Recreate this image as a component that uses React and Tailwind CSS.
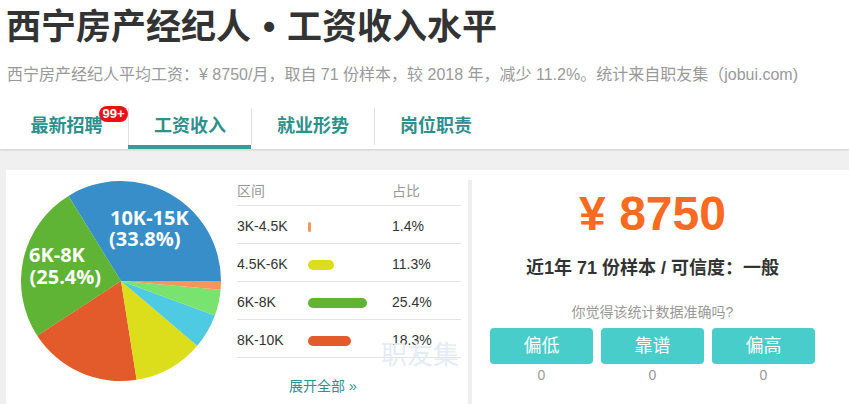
import React from "react";

const slices = [
  { p: 33.8, c: "#378ec8" },
  { p: 25.4, c: "#5fb335" },
  { p: 18.3, c: "#e35b2a" },
  { p: 11.3, c: "#dcdd1b" },
  { p: 5.6, c: "#4ecbe3" },
  { p: 4.2, c: "#78e36e" },
  { p: 1.4, c: "#f79656" },
];

function Pie() {
  const cx = 101, cy = 101, r = 100;
  let a = 0;
  const paths = slices.map((s, i) => {
    const a0 = a;
    const a1 = a + (s.p / 100) * Math.PI * 2;
    a = a1;
    const x0 = cx + r * Math.cos(a0), y0 = cy - r * Math.sin(a0);
    const x1 = cx + r * Math.cos(a1), y1 = cy - r * Math.sin(a1);
    const large = a1 - a0 > Math.PI ? 1 : 0;
    const d = `M${cx},${cy} L${x0},${y0} A${r},${r} 0 ${large} 0 ${x1},${y1} Z`;
    return <path key={i} d={d} fill={s.c} />;
  });
  return (
    <svg width="202" height="202" viewBox="0 0 202 202" className="shrink-0">
      {paths}
      <g fill="#fff" fontFamily="'Open Sans', sans-serif" fontWeight="700" fontSize="20">
        <text x="90" y="44.5">10K-15K</text>
        <text x="89" y="66">(33.8%)</text>
        <text x="9" y="82">6K-8K</text>
        <text x="9.5" y="103.5">(25.4%)</text>
      </g>
    </svg>
  );
}

const rows = [
  { r: "3K-4.5K", p: "1.4%", w: 3, c: "bg-[#f79656]" },
  { r: "4.5K-6K", p: "11.3%", w: 26, c: "bg-[#dcdd1b]" },
  { r: "6K-8K", p: "25.4%", w: 59, c: "bg-[#5fb335]" },
  { r: "8K-10K", p: "18.3%", w: 43, c: "bg-[#e35b2a]" },
];

const tabs = ["最新招聘", "工资收入", "就业形势", "岗位职责"];

export default function App() {
  return (
    <div className="w-[849px] h-[404px] overflow-hidden bg-[#f0f0f0] font-['Liberation_Sans','Noto_Sans_CJK_SC',sans-serif] flex flex-col">
      {/* Header */}
      <div className="bg-white h-[149px] shrink-0 shadow-[0_1px_2px_rgba(0,0,0,0.15)] relative z-10">
        <div className="h-[54px] leading-[54px] pl-[6px] text-[35px] font-bold text-[#333] whitespace-nowrap">
          西宁房产经纪人<span className="inline-block w-[36px] text-center">•</span>工资收入水平
        </div>
        <div className="h-[42px] leading-[42px] pl-[7px] text-[16px] text-[#999] whitespace-nowrap">
          西宁房产经纪人平均工资：¥ 8750/月，取自 71 份样本，较 2018 年，减少 11.2%。统计来自职友集（jobui.com)
        </div>
        <div className="mt-[12px] flex pl-[5px]">
          {tabs.map((t, i) => (
            <div key={t} className="w-[123px] flex flex-col relative">
              <div
                className={`h-[37px] flex items-center justify-center text-[18px] font-bold text-[#2e8f8c] ${
                  i > 0 ? "border-l border-[#e0e0e0]" : ""
                }`}
              >
                {t}
              </div>
              <div className={`h-[4px] ${i === 1 ? "bg-[#379b97]" : ""}`} />
              {i === 0 && (
                <div className="absolute left-[94px] top-[-2px] w-[29px] h-[16px] rounded-full bg-[#e8111b] text-white text-[13px] font-bold leading-[16px] text-center font-['Liberation_Sans',sans-serif]">
                  99+
                </div>
              )}
            </div>
          ))}
        </div>
      </div>

      {/* Card */}
      <div className="mt-[21px] ml-[6px] flex-1 bg-white flex">
        {/* Left */}
        <div className="w-[462px] shrink-0 flex pt-[6px] pl-[14px]">
          <div className="mt-[4px]">
            <Pie />
          </div>
          <div className="ml-[15px] w-[224px] relative">
            <div className="h-[30px] flex items-center pt-[1px] text-[14px] text-[#999] border-b border-[#e3e3e3]">
              <div className="w-[155px]">区间</div>
              <div>占比</div>
            </div>
            {rows.map((row) => (
              <div
                key={row.r}
                className="h-[38px] flex items-center pt-[4px] text-[14px] text-[#333] border-b border-[#e3e3e3]"
              >
                <div className="w-[71px]">{row.r}</div>
                <div className="w-[84px] flex items-center">
                  <div className={`h-[10px] rounded-full ${row.c}`} style={{ width: row.w }} />
                </div>
                <div>{row.p}</div>
              </div>
            ))}
            <div className="mt-[18px] h-[20px] leading-[20px] pl-[52px] text-[14px] text-[#2b9294]">
              展开全部 »
            </div>
            <div className="absolute left-[144px] top-[164px] text-[26px] leading-[30px] text-[#e4ecf8] select-none">
              职友集
            </div>
          </div>
        </div>

        {/* Right */}
        <div className="mt-[10px] w-[365px] border-l-4 border-[#eeeeee] flex flex-col items-center">
          <div className="mt-[6px] h-[56px] leading-[56px] text-[48px] font-bold text-[#fa6a20] font-['Liberation_Sans',sans-serif] whitespace-pre">
            ¥ 8750
          </div>
          <div className="mt-[11px] h-[30px] leading-[30px] text-[18px] font-bold text-[#333]">
            近1年 71 份样本 / 可信度：一般
          </div>
          <div className="mt-[19px] h-[20px] leading-[20px] text-[14px] text-[#999]">
            你觉得该统计数据准确吗?
          </div>
          <div className="mt-[6px] flex gap-[8px]">
            {["偏低", "靠谱", "偏高"].map((b) => (
              <div key={b} className="flex flex-col items-center">
                <div className="w-[103px] h-[36px] rounded-[4px] bg-[#48cdcb] text-white text-[18px] flex items-center justify-center">
                  {b}
                </div>
                <div className="mt-[1px] h-[20px] leading-[20px] text-[14px] text-[#999]">0</div>
              </div>
            ))}
          </div>
        </div>
      </div>
    </div>
  );
}
